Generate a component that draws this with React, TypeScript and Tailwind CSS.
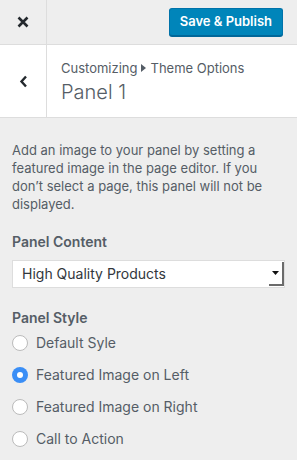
import { useState } from "react";

const styles = ["Default Syle", "Featured Image on Left", "Featured Image on Right", "Call to Action"];

export default function App() {
  const [choice, setChoice] = useState(1);

  return (
    <div className="w-[297px] h-[460px] overflow-hidden bg-[#eeeeee] text-[#555d66] font-['Inter','Liberation_Sans',sans-serif]">
      {/* Header */}
      <div className="flex h-[45px] border-b border-[#dddddd]">
        <button className="w-[47px] border-r border-[#dddddd] flex items-center justify-center text-[#23282d]">
          <svg width="12" height="12" viewBox="0 0 12 12">
            <path d="M1.5 1.5 L10.5 10.5 M10.5 1.5 L1.5 10.5" stroke="currentColor" strokeWidth="2.6" />
          </svg>
        </button>
        <div className="flex-1 flex items-start justify-end pt-[8px] pr-[14px]">
          <button className="h-[28px] px-[10px] rounded-[3px] bg-[#0085ba] border border-[#0073aa] border-b-[#006799] shadow-[0_1px_0_#006799] text-white text-[13px] font-semibold">
            Save &amp; Publish
          </button>
        </div>
      </div>

      {/* Section title */}
      <div className="flex h-[73px] bg-white border-b border-[#dddddd]">
        <button className="w-[47px] border-r border-[#dddddd] flex items-center justify-center text-[#23282d]">
          <svg width="9" height="13" viewBox="0 0 9 13">
            <path d="M7 1.5 L2.5 6.5 L7 11.5" fill="none" stroke="currentColor" strokeWidth="2.4" />
          </svg>
        </button>
        <div className="flex-1 pl-[14px] pt-[14px]">
          <div className="flex items-center gap-[4px] text-[13px] leading-[18px]">
            <span>Customizing</span>
            <svg width="5" height="8" viewBox="0 0 5 8">
              <path d="M0 0 L5 4 L0 8 Z" fill="currentColor" />
            </svg>
            <span>Theme Options</span>
          </div>
          <div className="text-[20px] leading-[26px] font-light mt-[2px]">Panel 1</div>
        </div>
      </div>

      {/* Body */}
      <div className="px-[12px] pt-[23px]">
        <p className="text-[13px] leading-[18px]">
          Add an image to your panel by setting a featured image in the page editor. If you don’t select a page, this panel will not be displayed.
        </p>

        <div className="mt-[20px] text-[14px] font-semibold leading-[18px]">Panel Content</div>
        <div className="mt-[9px] flex h-[28px] bg-white border border-[#dddddd]">
          <div className="flex-1 pl-[9px] text-[14px] leading-[26px] text-[#32373c]">High Quality Products</div>
          <div className="w-[15px] my-[1px] flex items-center justify-center border-r-2 border-b-2 border-[#6b6b6b] bg-white">
            <svg width="7" height="4" viewBox="0 0 7 4">
              <path d="M0 0 L7 0 L3.5 4 Z" fill="#111" />
            </svg>
          </div>
        </div>

        <div className="mt-[21px] text-[14px] font-semibold leading-[18px]">Panel Style</div>
        <div className="mt-[0px] flex flex-col">
          {styles.map((label, i) => (
            <label key={label} className="flex items-center h-[32px] gap-[8px] cursor-pointer" onClick={() => setChoice(i)}>
              <span
                className={
                  i === choice
                    ? "w-[16px] h-[16px] rounded-full bg-[#3a8ef6] flex items-center justify-center"
                    : "w-[16px] h-[16px] rounded-full bg-white border border-[#bbbbbb]"
                }
              >
                {i === choice && <span className="w-[6px] h-[6px] rounded-full bg-white" />}
              </span>
              <span className="text-[14px] leading-[18px]">{label}</span>
            </label>
          ))}
        </div>
      </div>
    </div>
  );
}
